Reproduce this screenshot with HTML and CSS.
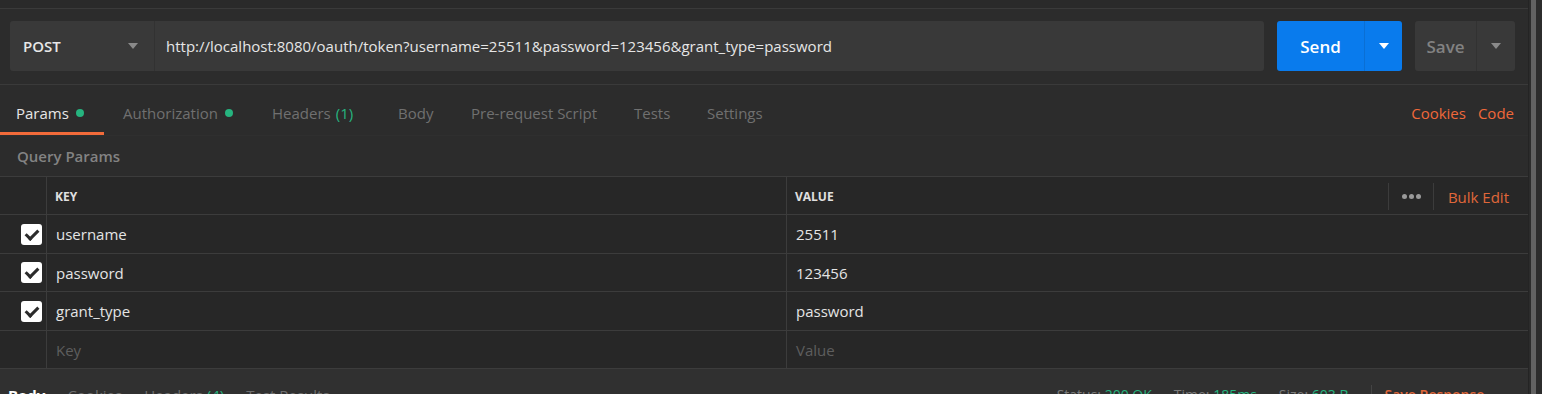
FILE: index.html
```html
<!DOCTYPE html>
<html lang="en">
<head>
    <meta charset="UTF-8">
    <title>Postman - Request</title>
    <link rel="stylesheet" href="styles.css">
</head>
<body>
    <div class="app">
        <div class="main">
            <div class="top-strip"></div>

            <div class="request-bar">
                <div class="url-group">
                    <div class="method">
                        <span>POST</span>
                        <span class="caret"></span>
                    </div>
                    <div class="url">http://localhost:8080/oauth/token?username=25511&amp;password=123456&amp;grant_type=password</div>
                </div>
                <div class="btn send">
                    <span class="btn-label">Send</span>
                    <span class="btn-split"><span class="caret white"></span></span>
                </div>
                <div class="btn save">
                    <span class="btn-label">Save</span>
                    <span class="btn-split"><span class="caret"></span></span>
                </div>
            </div>

            <div class="tabs">
                <div class="tab active">Params <span class="dot"></span></div>
                <div class="tab">Authorization <span class="dot"></span></div>
                <div class="tab">Headers <span class="count">(1)</span></div>
                <div class="tab">Body</div>
                <div class="tab">Pre-request Script</div>
                <div class="tab">Tests</div>
                <div class="tab">Settings</div>
                <div class="tab-links">
                    <span>Cookies</span>
                    <span>Code</span>
                </div>
            </div>

            <div class="section-title">Query Params</div>

            <div class="params">
                <div class="row head">
                    <div class="cell check"></div>
                    <div class="cell key">KEY</div>
                    <div class="cell value">VALUE
                        <div class="head-actions">
                            <span class="more"><i></i><i></i><i></i></span>
                            <span class="bulk">Bulk Edit</span>
                        </div>
                    </div>
                </div>
                <div class="row">
                    <div class="cell check"><span class="box"></span></div>
                    <div class="cell key">username</div>
                    <div class="cell value">25511</div>
                </div>
                <div class="row short">
                    <div class="cell check"><span class="box"></span></div>
                    <div class="cell key">password</div>
                    <div class="cell value">123456</div>
                </div>
                <div class="row">
                    <div class="cell check"><span class="box"></span></div>
                    <div class="cell key">grant_type</div>
                    <div class="cell value">password</div>
                </div>
                <div class="row short empty">
                    <div class="cell check"></div>
                    <div class="cell key">Key</div>
                    <div class="cell value">Value</div>
                </div>
            </div>

            <div class="response-bar">
                <div class="resp-tabs">
                    <span class="current">Body</span>
                    <span>Cookies</span>
                    <span>Headers <em>(4)</em></span>
                    <span>Test Results</span>
                </div>
                <div class="resp-meta">
                    <span>Status: <em>200 OK</em></span>
                    <span>Time: <em>185ms</em></span>
                    <span>Size: <em>603 B</em></span>
                    <span class="save-resp">Save Response <span class="caret"></span></span>
                </div>
            </div>
        </div>
        <div class="scrollbar"><div class="thumb"></div></div>
    </div>
</body>
</html>
```

FILE: styles.css
```css
body {
    margin: 0;
    font-family: "Open Sans", "Liberation Sans", sans-serif;
    font-size: 15px;
    background-color: #2c2c2c;
    color: #e0e0e0;
    overflow: hidden;
}
.app {
    display: flex;
    height: 394px;
}
.main {
    flex: 1;
    display: flex;
    flex-direction: column;
    min-width: 0;
}
.main > div {
    flex-shrink: 0;
}
.scrollbar {
    width: 13px;
    background: #2c2c2c;
    border-left: 1px solid #242424;
}
.thumb {
    width: 5px;
    height: 100%;
    margin-left: 2px;
    background: #626262;
}
.top-strip {
    height: 8px;
    background: #2a2a2a;
    border-bottom: 1px solid #3a3a3a;
}

/* request bar */
.request-bar {
    display: flex;
    align-items: center;
    padding: 12px 13px 13px 10px;
    border-bottom: 1px solid #3a3a3a;
}
.url-group {
    flex: 1;
    display: flex;
    height: 50px;
    background: #393939;
    border-radius: 3px;
}
.method {
    width: 145px;
    display: flex;
    align-items: center;
    justify-content: space-between;
    padding: 0 16px 0 13px;
    box-sizing: border-box;
    font-weight: 600;
    color: #e8e8e8;
    border-right: 1px solid #323232;
}
.url {
    display: flex;
    align-items: center;
    padding-left: 11px;
    color: #e6e6e6;
    white-space: nowrap;
}
.caret {
    display: inline-block;
    width: 0;
    height: 0;
    border-left: 5px solid transparent;
    border-right: 5px solid transparent;
    border-top: 6px solid #8a8a8a;
}
.caret.white {
    border-top-color: #fff;
}
.btn {
    display: flex;
    height: 50px;
    border-radius: 3px;
    font-size: 17px;
    font-weight: 600;
}
.btn-label {
    display: flex;
    align-items: center;
    justify-content: center;
}
.btn-split {
    flex: 1;
    display: flex;
    align-items: center;
    justify-content: center;
}
.send {
    margin-left: 13px;
    width: 125px;
    background: #097bed;
    color: #fff;
}
.send .btn-label {
    width: 87px;
    border-right: 1px solid #0a6fd4;
}
.save {
    margin-left: 13px;
    width: 100px;
    background: #393939;
    color: #828282;
}
.save .btn-label {
    width: 61px;
    border-right: 1px solid #323232;
}

/* tabs */
.tabs {
    display: flex;
    align-items: stretch;
    height: 50px;
    border-bottom: 1px solid #2f2f2f;
}
.tab {
    display: flex;
    align-items: center;
    padding: 9px 0 0 19px;
    box-sizing: border-box;
    color: #707070;
    border-bottom: 3px solid transparent;
    white-space: nowrap;
}
.tab:nth-child(1) { width: 104px; padding-left: 16px; }
.tab:nth-child(2) { width: 149px; }
.tab:nth-child(3) { width: 126px; }
.tab:nth-child(4) { width: 73px; }
.tab:nth-child(5) { width: 163px; }
.tab:nth-child(6) { width: 73px; }
.tab.active {
    color: #e6e6e6;
    border-bottom-color: #f26b3a;
}
.dot {
    display: inline-block;
    width: 8px;
    height: 8px;
    margin-left: 7px;
    border-radius: 50%;
    background: #26b47f;
}
.count {
    margin-left: 5px;
    color: #26b47f;
}
.tab-links {
    margin-left: auto;
    display: flex;
    align-items: center;
    gap: 12px;
    padding: 6px 14px 0 0;
    color: #f0683a;
}

/* params table */
.section-title {
    height: 40px;
    box-sizing: border-box;
    padding: 10px 17px 0;
    font-weight: 600;
    color: #838383;
}
.params {
    background: #272727;
}
.row {
    display: flex;
    height: 39px;
    box-sizing: border-box;
    border-top: 1px solid #3c3c3c;
}
.row.short,
.row.head {
    height: 38px;
}
.cell {
    display: flex;
    align-items: center;
}
.cell.check {
    width: 47px;
    justify-content: center;
    padding-left: 16px;
    box-sizing: border-box;
    border-right: 1px solid #3c3c3c;
}
.cell.key {
    width: 740px;
    padding-left: 9px;
    box-sizing: border-box;
    border-right: 1px solid #3c3c3c;
    color: #e4e4e4;
}
.cell.value {
    flex: 1;
    padding-left: 9px;
    color: #e4e4e4;
}
.head .cell {
    font-size: 12px;
    font-weight: 700;
    color: #e0e0e0;
}
.head .cell.key,
.head .cell.value {
    padding-left: 8px;
    padding-top: 2px;
}
.head-actions {
    margin-left: auto;
    display: flex;
    align-items: center;
    height: 100%;
}
.more {
    display: flex;
    align-items: center;
    gap: 2px;
    height: 27px;
    padding: 0 12px 0 13px;
    border-left: 1px solid #3c3c3c;
    border-right: 1px solid #3c3c3c;
}
.more i {
    width: 5px;
    height: 5px;
    border-radius: 50%;
    background: #9a9a9a;
}
.bulk {
    padding: 0 19px 0 14px;
    font-size: 15px;
    font-weight: 400;
    color: #e0673a;
}
.row.empty .cell {
    color: #5e5e5e;
}
.box {
    width: 21px;
    height: 21px;
    border-radius: 3px;
    background: #fff;
    position: relative;
}
.box::after {
    content: "";
    position: absolute;
    left: 7px;
    top: 3px;
    width: 5px;
    height: 10px;
    border-right: 3px solid #2b2b2b;
    border-bottom: 3px solid #2b2b2b;
    transform: rotate(45deg);
}

/* response bar */
.response-bar {
    flex: 1;
    display: flex;
    justify-content: space-between;
    align-items: flex-start;
    padding-top: 16px;
    background: #303030;
    border-top: 1px solid #3c3c3c;
    white-space: nowrap;
}
.resp-tabs {
    display: flex;
    gap: 22px;
    padding-left: 8px;
    color: #6e6e6e;
}
.resp-tabs .current {
    color: #fff;
    font-weight: 700;
}
.resp-meta {
    display: flex;
    gap: 22px;
    padding-right: 20px;
    font-size: 14px;
    color: #7a7a7a;
}
.resp-meta em,
.resp-tabs em {
    font-style: normal;
    color: #26b47f;
}
.save-resp {
    padding-left: 13px;
    border-left: 1px solid #444;
    color: #e0673a;
    font-weight: 600;
}
.save-resp .caret {
    margin-left: 10px;
    border-top-color: #e0673a;
}
```
